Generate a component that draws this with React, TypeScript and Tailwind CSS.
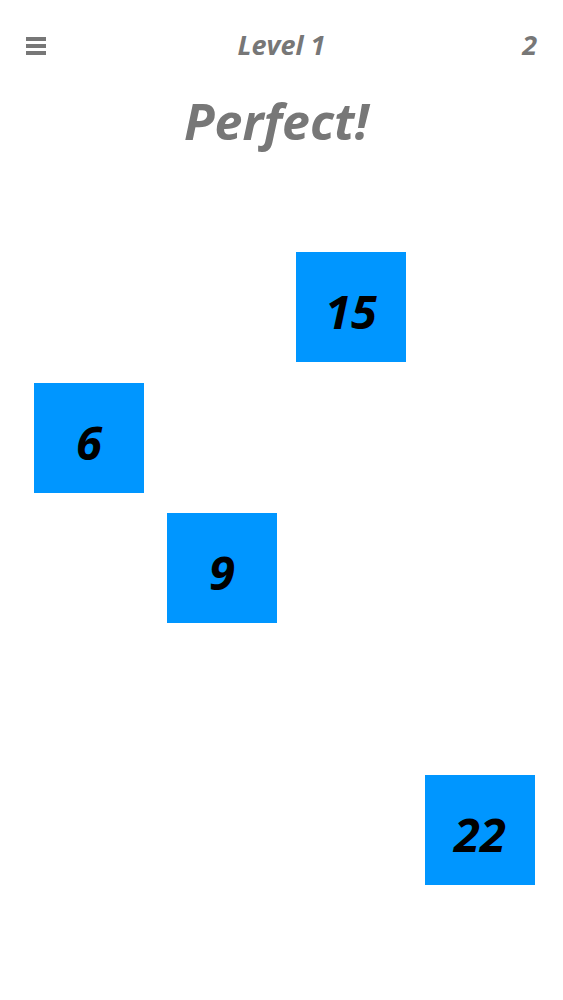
import React from "react";

type Tile = { value: number; left: number; top: number };

// board coordinates, relative to the board area below the title
const tiles: Tile[] = [
  { value: 15, left: 296, top: 82 },
  { value: 6, left: 34, top: 213 },
  { value: 9, left: 167, top: 343 },
  { value: 22, left: 425, top: 605 },
];

const font = { fontFamily: "'Open Sans', Lato, sans-serif" };

function MenuIcon() {
  return (
    <div className="flex w-[20px] flex-col gap-[3.5px]">
      <span className="block h-[3.5px] w-full bg-[#777777]" />
      <span className="block h-[3.5px] w-full bg-[#777777]" />
      <span className="block h-[3.5px] w-full bg-[#777777]" />
    </div>
  );
}

export default function App() {
  return (
    <div className="flex h-[1000px] w-full flex-col bg-white" style={font}>
      <header className="relative flex h-[92px] items-center justify-between px-[26px] pb-[2px]">
        <button className="pt-[2px]">
          <MenuIcon />
        </button>
        <span className="absolute left-1/2 -translate-x-1/2 text-[27px] font-bold italic text-[#777777]">
          Level 1
        </span>
        <span className="text-[27px] font-bold italic text-[#777777]">2</span>
      </header>

      <h1 className="flex h-[78px] items-start justify-center pt-[4px] pr-[10px] text-[50px] leading-none font-bold italic text-[#777777]">
        Perfect!
      </h1>

      <div className="relative flex-1">
        {tiles.map((t) => (
          <div
            key={t.value}
            className="absolute flex h-[110px] w-[110px] items-center justify-center bg-[#0096ff] pt-[8px] text-[47px] font-bold italic text-black"
            style={{ left: t.left, top: t.top }}
          >
            {t.value}
          </div>
        ))}
      </div>
    </div>
  );
}
